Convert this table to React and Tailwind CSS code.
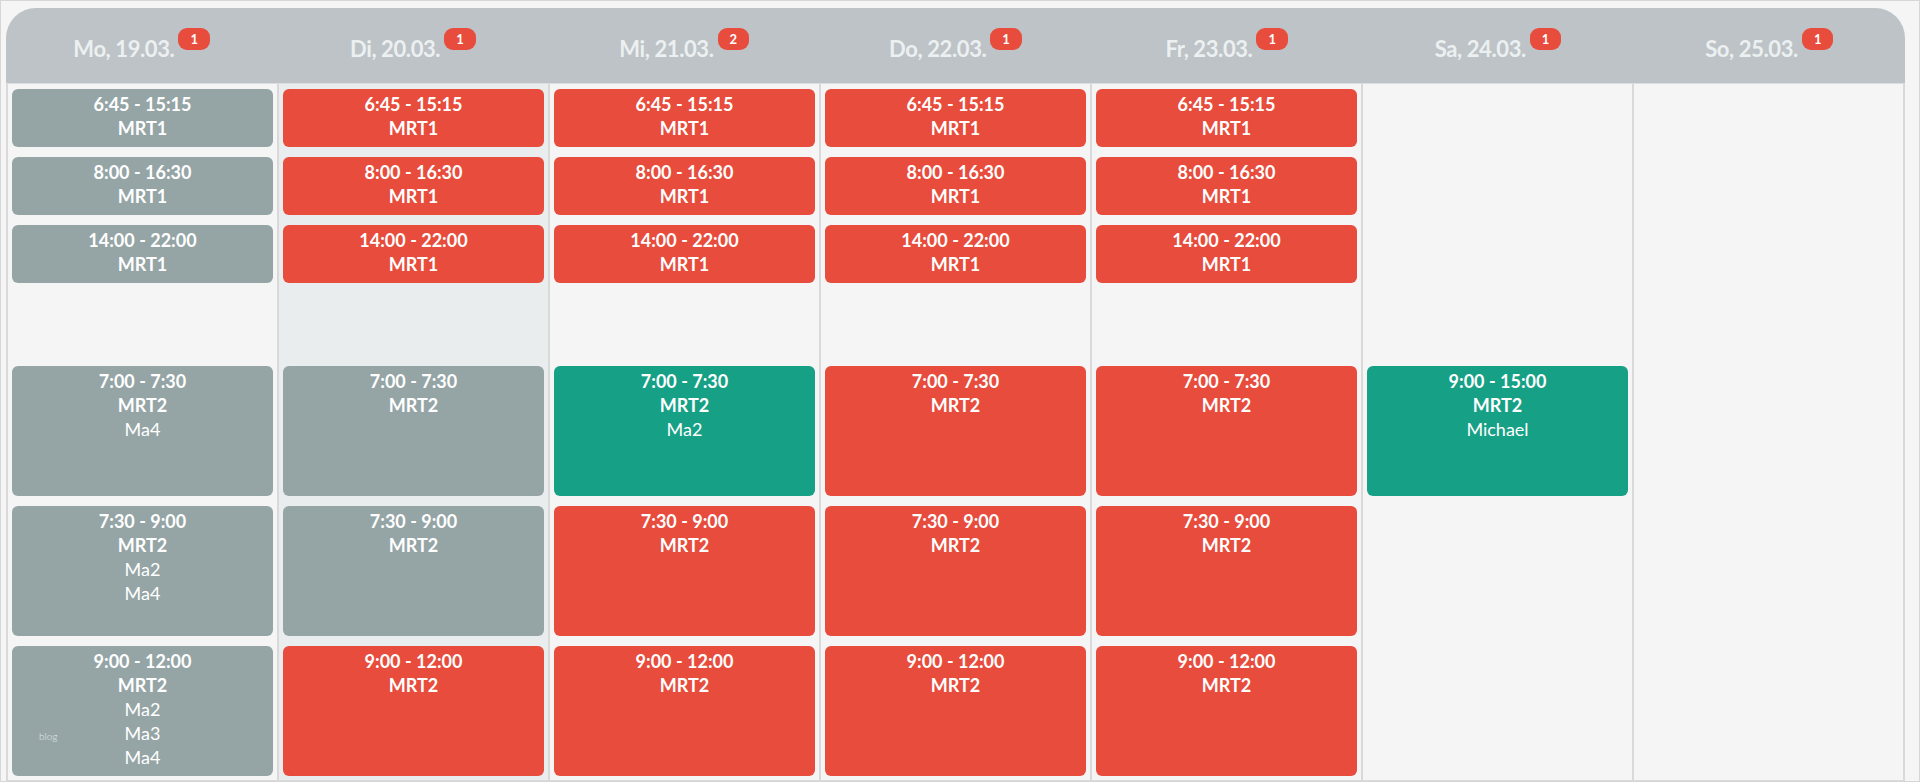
import React from 'react';

const days = [
  { label: 'Mo, 19.03.', count: 1 },
  { label: 'Di, 20.03.', count: 1, today: true },
  { label: 'Mi, 21.03.', count: 2 },
  { label: 'Do, 22.03.', count: 1 },
  { label: 'Fr, 23.03.', count: 1 },
  { label: 'Sa, 24.03.', count: 1 },
  { label: 'So, 25.03.', count: 1 },
];

const colors = {
  gray: 'bg-[#95a5a6]',
  red: 'bg-[#e74c3c]',
  green: 'bg-[#16a085]',
};

const early = [
  { time: '6:45 - 15:15', room: 'MRT1' },
  { time: '8:00 - 16:30', room: 'MRT1' },
  { time: '14:00 - 22:00', room: 'MRT1' },
];

// one entry per day: [row1, row2, row3] and [row4, row5, row6]
const schedule = [
  {
    top: early.map((s) => ({ ...s, color: 'gray' })),
    bottom: [
      { time: '7:00 - 7:30', room: 'MRT2', names: ['Ma4'], color: 'gray' },
      { time: '7:30 - 9:00', room: 'MRT2', names: ['Ma2', 'Ma4'], color: 'gray' },
      { time: '9:00 - 12:00', room: 'MRT2', names: ['Ma2', 'Ma3', 'Ma4'], color: 'gray', blog: true },
    ],
  },
  {
    top: early.map((s) => ({ ...s, color: 'red' })),
    bottom: [
      { time: '7:00 - 7:30', room: 'MRT2', color: 'gray' },
      { time: '7:30 - 9:00', room: 'MRT2', color: 'gray' },
      { time: '9:00 - 12:00', room: 'MRT2', color: 'red' },
    ],
  },
  {
    top: early.map((s) => ({ ...s, color: 'red' })),
    bottom: [
      { time: '7:00 - 7:30', room: 'MRT2', names: ['Ma2'], color: 'green' },
      { time: '7:30 - 9:00', room: 'MRT2', color: 'red' },
      { time: '9:00 - 12:00', room: 'MRT2', color: 'red' },
    ],
  },
  {
    top: early.map((s) => ({ ...s, color: 'red' })),
    bottom: [
      { time: '7:00 - 7:30', room: 'MRT2', color: 'red' },
      { time: '7:30 - 9:00', room: 'MRT2', color: 'red' },
      { time: '9:00 - 12:00', room: 'MRT2', color: 'red' },
    ],
  },
  {
    top: early.map((s) => ({ ...s, color: 'red' })),
    bottom: [
      { time: '7:00 - 7:30', room: 'MRT2', color: 'red' },
      { time: '7:30 - 9:00', room: 'MRT2', color: 'red' },
      { time: '9:00 - 12:00', room: 'MRT2', color: 'red' },
    ],
  },
  {
    top: [null, null, null],
    bottom: [
      { time: '9:00 - 15:00', room: 'MRT2', names: ['Michael'], color: 'green' },
      null,
      null,
    ],
  },
  { top: [null, null, null], bottom: [null, null, null] },
];

function Shift({ shift, tall }) {
  const h = tall ? 'h-[130px]' : 'h-[58px]';
  if (!shift) return <div className={h} />;
  return (
    <div className={`relative ${h} ${colors[shift.color]} rounded-[6px] pt-[3px] text-center text-white text-[18px] leading-[24px]`}>
      <div className="font-bold">{shift.time}</div>
      <div className="font-bold">{shift.room}</div>
      {(shift.names || []).map((n) => (
        <div key={n}>{n}</div>
      ))}
      {shift.blog && (
        <span className="absolute left-[27px] top-[84px] text-[10px] leading-[12px] font-light text-[#e3e9e9]">blog</span>
      )}
    </div>
  );
}

export default function App() {
  return (
    <div className="w-full h-[782px] border border-[#d6d6d6] bg-[#f5f5f5] pl-[5px] pr-[14px] pt-[7px] font-[Lato,sans-serif] overflow-hidden">
      <div className="grid grid-cols-7 h-[75px] bg-[#bdc3c7] rounded-t-[30px]">
        {days.map((d) => (
          <div key={d.label} className="flex justify-center items-start pt-[26px]">
            <span className="text-[22px] leading-[30px] font-bold text-[#ecf0f1] tracking-[-0.4px]">{d.label}</span>
            <span className="ml-[4px] -mt-[6px] h-[22px] px-[12px] rounded-[9px] bg-[#e74c3c] text-white text-[13px] font-bold leading-[22px]">
              {d.count}
            </span>
          </div>
        ))}
      </div>
      <div className="grid grid-cols-7 h-[698px] border-t border-[#dddddd] border-r-2 border-b border-r-[#d9d9d9] border-b-[#d9d9d9]">
        {schedule.map((col, i) => (
          <div
            key={i}
            className={`flex flex-col gap-[10px] border-l-2 border-[#d9d9d9] px-[4px] pt-[5px] ${days[i].today ? 'bg-[#e9eded]' : 'bg-[#f5f5f5]'}`}
          >
            {col.top.map((s, j) => (
              <Shift key={'t' + j} shift={s} />
            ))}
            <div className="h-[63px]" />
            {col.bottom.map((s, j) => (
              <Shift key={'b' + j} shift={s} tall />
            ))}
          </div>
        ))}
      </div>
    </div>
  );
}
